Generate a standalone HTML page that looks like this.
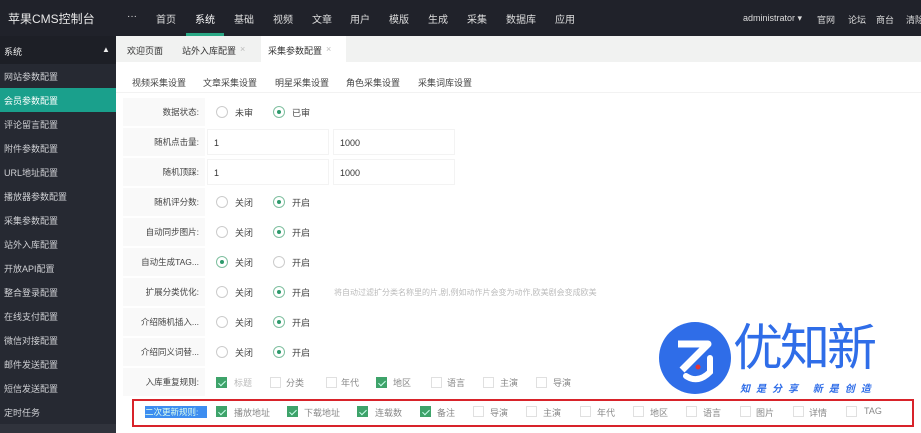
<!DOCTYPE html><html><head><meta charset="utf-8"><style>
*{margin:0;padding:0;box-sizing:border-box}
body{width:921px;height:433px;overflow:hidden;background:#fff;font-family:"Liberation Sans","Noto Sans CJK SC",sans-serif;font-size:9px;color:#333;position:relative}
span{white-space:nowrap}
.top{position:absolute;left:0;top:0;width:921px;height:36px;background:#20222a;color:#ddd}
.top span{position:absolute;top:11px;font-size:10px}
.side{position:absolute;left:0;top:36px;width:116px;height:397px;background:#262932;color:#cfd0d4}
.side .h{height:28px;background:#1d1f26;padding:9px 4px;color:#eee}
.side .i{position:absolute;left:4px;font-size:9px}
.tabs{position:absolute;left:116px;top:36px;width:805px;height:26px;background:#f1f2f1}
.tabs span{position:absolute;top:8px}
.lab{position:absolute;left:123px;width:82px;height:28px;background:#f9f9f9;text-align:right;padding-right:6px;line-height:28px;color:#444;font-size:8.5px}
.r{position:absolute;width:12px;height:12px;border:1px solid #ccc;border-radius:50%;background:#fff}
.r.on{border-color:#7fbf9f}.r.on:after{content:"";position:absolute;left:3px;top:3px;width:4px;height:4px;border-radius:50%;background:#2d9a6c}
.t{position:absolute;font-size:9px;color:#444;margin-top:-1px}
.cb{position:absolute;width:11px;height:11px;border:1px solid #e0e0e0;background:#fff}
.cb.on{background:#3ea36a;border-color:#3ea36a}
.cb.on:after{content:"";position:absolute;left:3px;top:1px;width:3px;height:6px;border:solid #cfe;border-width:0 1px 1px 0;transform:rotate(45deg)}
.inp{position:absolute;height:26px;background:#fff;border:1px solid #f3f3f3;padding:8px 6px;font-size:9px}
</style></head><body>
<div class="top">
<span style="left:8px;font-size:12px;top:10px;color:#e8e8e8">苹果CMS控制台</span>
<span style="left:127px">···</span><span style="left:156px">首页</span><span style="left:195px;color:#fff">系统</span><span style="left:234px">基础</span><span style="left:273px">视频</span><span style="left:312px">文章</span><span style="left:350px">用户</span><span style="left:389px">模版</span><span style="left:428px">生成</span><span style="left:467px">采集</span><span style="left:506px">数据库</span><span style="left:555px">应用</span>
<div style="position:absolute;left:186px;top:33px;width:38px;height:3px;background:#2aa885"></div>
<span style="left:743px;font-size:9px;top:13px">administrator ▾</span><span style="left:817px;top:13px;font-size:9px">官网</span><span style="left:848px;top:13px;font-size:9px">论坛</span><span style="left:876px;top:13px;font-size:9px">商台</span><span style="left:906px;top:13px;font-size:9px">清除</span>
</div>
<div class="side"><div class="h">系统<span style="position:absolute;left:102px;top:9px;font-size:8px">▲</span></div>
<div style="position:absolute;left:0;top:52px;width:116px;height:24px;background:#1aa08c"></div>
<span class="i" style="top:34px">网站参数配置</span><span class="i" style="top:58px;color:#fff">会员参数配置</span><span class="i" style="top:82px">评论留言配置</span><span class="i" style="top:106px">附件参数配置</span><span class="i" style="top:130px">URL地址配置</span><span class="i" style="top:154px">播放器参数配置</span><span class="i" style="top:178px">采集参数配置</span><span class="i" style="top:202px">站外入库配置</span><span class="i" style="top:226px">开放API配置</span><span class="i" style="top:250px">整合登录配置</span><span class="i" style="top:274px">在线支付配置</span><span class="i" style="top:298px">微信对接配置</span><span class="i" style="top:322px">邮件发送配置</span><span class="i" style="top:346px">短信发送配置</span><span class="i" style="top:370px">定时任务</span>
<div style="position:absolute;left:0;top:388px;width:116px;height:9px;background:#30333c"></div>
</div>
<div class="tabs"><span style="left:11px">欢迎页面</span><span style="left:66px">站外入库配置</span><span style="left:124px;color:#bbb">×</span>
<div style="position:absolute;left:145px;top:0;width:85px;height:26px;background:#fff"></div><span style="left:152px">采集参数配置</span><span style="left:210px;color:#bbb">×</span></div>
<div style="position:absolute;left:116px;top:92px;width:805px;height:1px;background:#f2f2f2"></div>
<span class="t" style="left:132px;top:77px">视频采集设置</span><span class="t" style="left:203px;top:77px">文章采集设置</span><span class="t" style="left:275px;top:77px">明星采集设置</span><span class="t" style="left:346px;top:77px">角色采集设置</span><span class="t" style="left:418px;top:77px">采集词库设置</span>

<div class="lab" style="top:98px">数据状态:</div><div class="r" style="left:216px;top:106px"></div><span class="t" style="left:235px;top:107px">未审</span><div class="r on" style="left:273px;top:106px"></div><span class="t" style="left:292px;top:107px">已审</span>
<div class="lab" style="top:128px">随机点击量:</div><div class="inp" style="left:207px;top:129px;width:122px">1</div><div class="inp" style="left:333px;top:129px;width:122px">1000</div>
<div class="lab" style="top:158px">随机顶踩:</div><div class="inp" style="left:207px;top:159px;width:122px">1</div><div class="inp" style="left:333px;top:159px;width:122px">1000</div>

<div class="lab" style="top:188px">随机评分数:</div><div class="r" style="left:216px;top:196px"></div><span class="t" style="left:235px;top:197px">关闭</span><div class="r on" style="left:273px;top:196px"></div><span class="t" style="left:292px;top:197px">开启</span>
<div class="lab" style="top:218px">自动同步图片:</div><div class="r" style="left:216px;top:226px"></div><span class="t" style="left:235px;top:227px">关闭</span><div class="r on" style="left:273px;top:226px"></div><span class="t" style="left:292px;top:227px">开启</span>
<div class="lab" style="top:248px">自动生成TAG...</div><div class="r on" style="left:216px;top:256px"></div><span class="t" style="left:235px;top:257px">关闭</span><div class="r" style="left:273px;top:256px"></div><span class="t" style="left:292px;top:257px">开启</span>
<div class="lab" style="top:278px">扩展分类优化:</div><div class="r" style="left:216px;top:286px"></div><span class="t" style="left:235px;top:287px">关闭</span><div class="r on" style="left:273px;top:286px"></div><span class="t" style="left:292px;top:287px">开启</span>
<span class="t" style="left:334px;top:288px;color:#bbb;font-size:8px">将自动过滤扩分类名称里的片,剧,例如动作片会变为动作,欧美剧会变成欧美</span>
<div class="lab" style="top:308px">介绍随机插入...</div><div class="r" style="left:216px;top:316px"></div><span class="t" style="left:235px;top:317px">关闭</span><div class="r on" style="left:273px;top:316px"></div><span class="t" style="left:292px;top:317px">开启</span>
<div class="lab" style="top:338px">介绍同义词替...</div><div class="r" style="left:216px;top:346px"></div><span class="t" style="left:235px;top:347px">关闭</span><div class="r on" style="left:273px;top:346px"></div><span class="t" style="left:292px;top:347px">开启</span>
<div class="lab" style="top:368px">入库重复规则:</div>
<div class="cb on" style="left:216px;top:377px"></div><span class="t" style="left:234px;top:377px;color:#bbb">标题</span>
<div class="cb" style="left:270px;top:377px"></div><span class="t" style="left:286px;top:377px;color:#888">分类</span>
<div class="cb" style="left:326px;top:377px"></div><span class="t" style="left:341px;top:377px;color:#888">年代</span>
<div class="cb on" style="left:376px;top:377px"></div><span class="t" style="left:393px;top:377px;color:#888">地区</span>
<div class="cb" style="left:431px;top:377px"></div><span class="t" style="left:447px;top:377px;color:#888">语言</span>
<div class="cb" style="left:483px;top:377px"></div><span class="t" style="left:500px;top:377px;color:#888">主演</span>
<div class="cb" style="left:536px;top:377px"></div><span class="t" style="left:553px;top:377px;color:#888">导演</span>

<div style="position:absolute;left:132px;top:399px;width:782px;height:28px;border:2px solid #d8232a"></div>
<span style="position:absolute;left:145px;top:406px;width:62px;height:12px;background:#3d8df0;color:#dfe;font-size:8.5px;line-height:12px">二次更新规则:</span>
<div class="cb on" style="left:216px;top:406px"></div><span class="t" style="left:234px;top:407px;color:#888">播放地址</span>
<div class="cb on" style="left:287px;top:406px"></div><span class="t" style="left:304px;top:407px;color:#888">下载地址</span>
<div class="cb on" style="left:357px;top:406px"></div><span class="t" style="left:375px;top:407px;color:#888">连载数</span>
<div class="cb on" style="left:420px;top:406px"></div><span class="t" style="left:437px;top:407px;color:#888">备注</span>
<div class="cb" style="left:473px;top:406px"></div><span class="t" style="left:490px;top:407px;color:#888">导演</span>
<div class="cb" style="left:526px;top:406px"></div><span class="t" style="left:543px;top:407px;color:#888">主演</span>
<div class="cb" style="left:580px;top:406px"></div><span class="t" style="left:597px;top:407px;color:#888">年代</span>
<div class="cb" style="left:633px;top:406px"></div><span class="t" style="left:650px;top:407px;color:#888">地区</span>
<div class="cb" style="left:686px;top:406px"></div><span class="t" style="left:703px;top:407px;color:#888">语言</span>
<div class="cb" style="left:740px;top:406px"></div><span class="t" style="left:756px;top:407px;color:#888">图片</span>
<div class="cb" style="left:793px;top:406px"></div><span class="t" style="left:809px;top:407px;color:#888">详情</span>
<div class="cb" style="left:846px;top:406px"></div><span class="t" style="left:864px;top:407px;color:#888">TAG</span>

<svg style="position:absolute;left:658px;top:322px" width="80" height="76" viewBox="0 0 80 76">
<circle cx="37" cy="36" r="36" fill="#2f6de8"/>
<path d="M20 22 H50 L24 48" stroke="#fff" stroke-width="7" fill="none" stroke-linejoin="round"/>
<path d="M28 54 Q40 62 52 50 L52 36" stroke="#fff" stroke-width="6" fill="none" stroke-linecap="round"/>
<circle cx="40" cy="45" r="2.5" fill="#e63333"/>
</svg>
<span style="position:absolute;left:733px;top:314px;font-size:50px;color:#2f6de8;letter-spacing:-3px;font-family:'Noto Sans CJK SC',sans-serif;line-height:60px">优知新</span>
<span style="position:absolute;left:740px;top:380px;font-size:10px;color:#2f6de8;font-style:italic;letter-spacing:6px;font-weight:bold">知是分享 新是创造</span>
</body></html>
